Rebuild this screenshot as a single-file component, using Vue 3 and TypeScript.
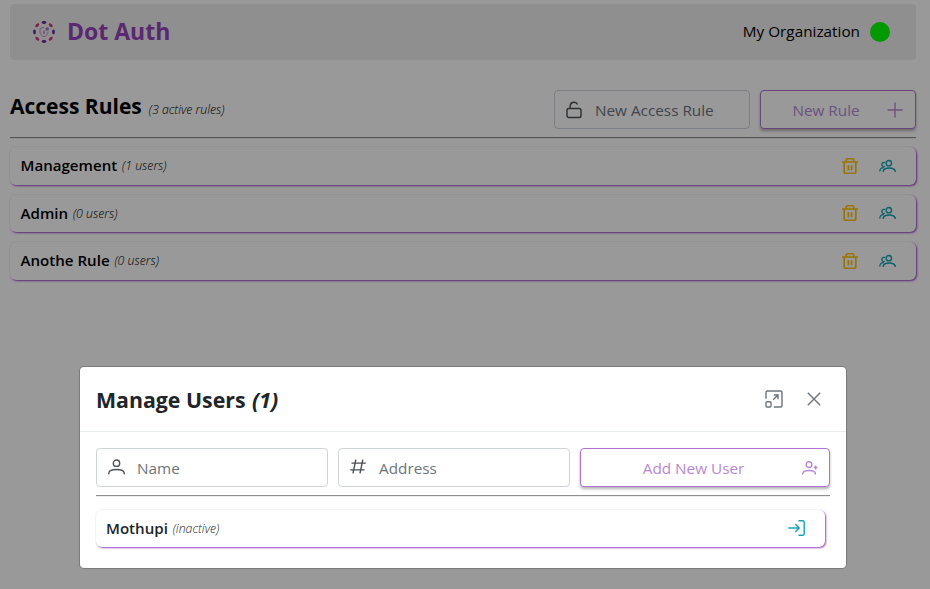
<script setup lang="ts">
import { ref } from 'vue'

interface Rule {
  name: string
  users: number
}

interface Member {
  name: string
  status: string
}

const rules = ref<Rule[]>([
  { name: 'Management', users: 1 },
  { name: 'Admin', users: 0 },
  { name: 'Anothe Rule', users: 0 },
])

const members = ref<Member[]>([{ name: 'Mothupi', status: 'inactive' }])

const logoDots = Array.from({ length: 8 }, (_, i) => ({
  angle: i * 45,
  color: i % 2 === 0 ? '#6a2a9c' : '#c83a88',
}))
</script>

<template>
  <div class="screen">
    <main class="page">
      <header class="topbar">
        <svg class="logo" viewBox="0 0 24 24">
          <ellipse
            v-for="dot in logoDots"
            :key="dot.angle"
            cx="12"
            cy="2.5"
            rx="2.4"
            ry="1.4"
            :fill="dot.color"
            :transform="`rotate(${dot.angle} 12 12)`"
          />
          <path d="M12 7.2L8 8.6V11.6C8 14 9.6 15.9 12 16.8C14.4 15.9 16 14 16 11.6" fill="none" stroke="#cf86bd" stroke-width="1" />
          <circle cx="15.2" cy="9" r="1.8" fill="#b070cc" />
          <path d="M12 10.4V14M11 12.4H13" stroke="#b070cc" stroke-width="1" />
        </svg>
        <h1 class="brand">Dot Auth</h1>
        <span class="org">My Organization</span>
        <span class="status"></span>
      </header>

      <section class="toolbar">
        <h2 class="heading">Access Rules</h2>
        <em class="note note-top">(3 active rules)</em>
        <label class="field rule-field">
          <svg class="icon lock" viewBox="0 0 16 18">
            <rect x="1" y="7.5" width="14" height="9" rx="1.8" />
            <path d="M4.2 7.5V4.8A3.8 3.8 0 0 1 11.5 3.6" />
          </svg>
          <span>New Access Rule</span>
        </label>
        <button class="button rule-button">
          <span class="button-label">New Rule</span>
          <svg class="icon plus" viewBox="0 0 16 16"><path d="M8 .5V15.5M.5 8H15.5" /></svg>
        </button>
      </section>

      <div class="divider"></div>

      <ul class="rules">
        <li v-for="rule in rules" :key="rule.name" class="row">
          <span class="row-name">{{ rule.name }}</span>
          <em class="note">({{ rule.users }} users)</em>
          <span class="actions">
            <svg class="icon trash" viewBox="0 0 16 16">
              <path d="M0 4H16M2.2 4V14A1.4 1.4 0 0 0 3.6 15.3H12.4A1.4 1.4 0 0 0 13.8 14V4M4.3 4V1.9A1.2 1.2 0 0 1 5.5.7H10.5A1.2 1.2 0 0 1 11.7 1.9V4M6.4 7.2V12.2M9.6 7.2V12.2" />
            </svg>
            <svg class="icon users" viewBox="0 0 17 14">
              <circle cx="9.8" cy="4.2" r="2.7" />
              <path d="M4.2 13V12C5 7.9 15.4 7.9 16.2 12V13M6 3.7A2.1 2.1 0 1 0 5.8 7.4M.8 12.6C.8 10 2 8.6 4.8 8.6" />
            </svg>
          </span>
        </li>
      </ul>
    </main>

    <div class="mask">
      <section class="dialog" role="dialog">
        <header class="dialog-header">
          <h2 class="dialog-title">Manage Users <i>(1)</i></h2>
          <svg class="icon expand" viewBox="0 0 18 18">
            <path d="M1 8.8V2.5A1.5 1.5 0 0 1 2.5 1H15.5A1.5 1.5 0 0 1 17 2.5V15.5A1.5 1.5 0 0 1 15.5 17H8.8M8.2 9.8L12.9 5.1M8.8 5H13V9.2" />
            <rect x="1" y="11.8" width="5" height="5.2" rx="1" />
          </svg>
          <svg class="icon close" viewBox="0 0 14 14"><path d="M.8.8L13.2 13.2M13.2.8L.8 13.2" /></svg>
        </header>
        <div class="dialog-body">
          <div class="form">
            <label class="field">
              <svg class="icon person" viewBox="0 0 17 16">
                <circle cx="8.5" cy="4.2" r="3.2" />
                <path d="M.8 15.2V14C1.4 9.4 15.6 9.4 16.2 14V15.2" />
              </svg>
              <span>Name</span>
            </label>
            <label class="field">
              <svg class="icon hash" viewBox="0 0 16 15"><path d="M5.8.6L3 14.4M12.8.6L10 14.4M1.5 4.1H15.8M.2 10.9H14.5" /></svg>
              <span>Address</span>
            </label>
            <button class="button">
              <span class="button-label">Add New User</span>
              <svg class="icon add-user" viewBox="0 0 16 14">
                <circle cx="7" cy="3.6" r="2.9" />
                <path d="M.7 13.4V12.6C1.2 8.5 12.9 8.5 13.4 12.6V13.4M13.6 4.6V8.4M11.7 6.5H15.5" />
              </svg>
            </button>
          </div>
          <div class="divider"></div>
          <div v-for="member in members" :key="member.name" class="row member">
            <span class="row-name">{{ member.name }}</span>
            <em class="note">({{ member.status }})</em>
            <svg class="icon enter" viewBox="0 0 18 16"><path d="M.3 8H11M7.3 4.1L11.2 8L7.3 11.9M10.5.8H14.8A1.4 1.4 0 0 1 16.2 2.2V13.8A1.4 1.4 0 0 1 14.8 15.2H10.5" /></svg>
          </div>
        </div>
      </section>
    </div>
  </div>
</template>

<style>
body {
  background: #fff;
  overflow: hidden;
}
</style>

<style scoped>
.screen {
  position: relative;
  width: 930px;
  height: 589px;
  overflow: hidden;
  font-family: "Open Sans", "Noto Sans", sans-serif;
  font-size: 15.3px;
  line-height: 24px;
  color: #000;
}
.screen * {
  box-sizing: border-box;
}
h1,
h2,
ul {
  margin: 0;
  padding: 0;
}
.page {
  padding: 4px 14px 0 10px;
}
.topbar {
  display: flex;
  align-items: center;
  height: 56px;
  padding: 0 26px 0 21.5px;
  border-radius: 4px;
  background: #efefef;
}
.logo {
  width: 24px;
  height: 24px;
  margin-right: 11.5px;
}
.brand {
  padding-bottom: 2px;
  font-size: 23px;
  line-height: 32px;
  font-weight: 700;
  color: #9443bd;
}
.org {
  margin-left: auto;
  padding-bottom: 2px;
}
.status {
  width: 20px;
  height: 20px;
  margin-left: 10px;
  border-radius: 50%;
  background: #0f0;
}
.toolbar {
  display: flex;
  align-items: center;
  height: 39px;
  margin-top: 30px;
}
.heading {
  margin-top: -8px;
  font-size: 21px;
  line-height: 32px;
  font-weight: 700;
}
.note {
  margin: 2px 0 0 4.8px;
  font-size: 12.3px;
  line-height: 20px;
  font-weight: 300;
  font-style: italic;
  white-space: nowrap;
}
.note-top {
  margin: 0 0 0 7px;
}
.field {
  display: flex;
  align-items: center;
  height: 39px;
  padding-left: 11px;
  border: 1px solid #ced4da;
  border-radius: 4px;
  background: #fff;
  color: #6c757d;
}
.rule-field {
  width: 196px;
  margin-left: auto;
}
.button {
  display: flex;
  align-items: center;
  height: 39px;
  padding: 0 12px 0 4px;
  border: 1px solid #b074d0;
  border-radius: 4px;
  background: #fff;
  box-shadow: 0 2px 3px rgba(0, 0, 0, 0.3);
  font: inherit;
  color: #b688d2;
}
.rule-button {
  width: 156px;
  margin-left: 10px;
}
.button-label {
  flex: 1;
  text-align: center;
}
.icon {
  flex: none;
  fill: none;
  stroke: currentColor;
  stroke-width: 1.4;
}
.lock {
  width: 16px;
  height: 18px;
  margin-right: 13px;
  color: #495057;
}
.plus {
  width: 16px;
  height: 16px;
}
.divider {
  height: 2px;
  margin-top: 8px;
  border-top: 1px solid #8e8e8e;
  border-bottom: 1px solid #eee;
}
.rules {
  display: flex;
  flex-direction: column;
  gap: 10px;
  margin-top: 8px;
  list-style: none;
}
.row {
  display: flex;
  align-items: center;
  height: 37.5px;
  padding: 0 20.5px 1px 10.5px;
  border-radius: 6px;
  background: #fff;
  box-shadow: 1px 1px 2px #9a45c8, 0 0 2px rgba(0, 0, 0, 0.06);
}
.row-name {
  font-size: 15.1px;
  font-weight: 600;
}
.actions {
  display: flex;
  align-items: center;
  gap: 21px;
  margin-left: auto;
  padding-top: 1px;
}
.trash {
  width: 16px;
  height: 16px;
  stroke-width: 1.7;
  color: #ffc107;
}
.users {
  width: 17px;
  height: 14px;
  color: #17a2b8;
}
.mask {
  position: absolute;
  inset: 0;
  display: flex;
  align-items: flex-end;
  justify-content: center;
  padding: 0 4px 20px 0;
  background: rgba(0, 0, 0, 0.4);
}
.dialog {
  width: 768px;
  height: 203px;
  border: 1px solid rgba(0, 0, 0, 0.2);
  border-radius: 5px;
  background: #fff;
  background-clip: padding-box;
  color: #212529;
}
.dialog-header {
  display: flex;
  align-items: center;
  height: 65px;
  padding: 0 25px 0 16px;
  border-bottom: 1px solid #e9ecef;
  color: #6c757d;
}
.dialog-title {
  margin-right: auto;
  padding-top: 2px;
  font-size: 21.3px;
  line-height: 32px;
  color: #212529;
}
.dialog-title i {
  margin-left: 1px;
}
.expand {
  width: 18px;
  height: 18px;
  margin-right: 24px;
}
.close {
  width: 14px;
  height: 14px;
}
.dialog-body {
  padding: 16px;
}
.form {
  display: grid;
  grid-template-columns: 232px 232px 250px;
  gap: 10px;
}
.person,
.hash {
  color: #495057;
}
.person {
  width: 17px;
  height: 16px;
  margin: 0 12px 2px 0;
}
.hash {
  width: 16px;
  height: 15px;
  margin: 0 13px 2px 0;
}
.add-user {
  width: 16px;
  height: 14px;
  margin-right: -1px;
}
.member {
  width: 729px;
  margin-top: 12.5px;
  padding: 0 19px 0 10px;
}
.enter {
  width: 18px;
  height: 16px;
  margin-left: auto;
  color: #17a2b8;
}
</style>
